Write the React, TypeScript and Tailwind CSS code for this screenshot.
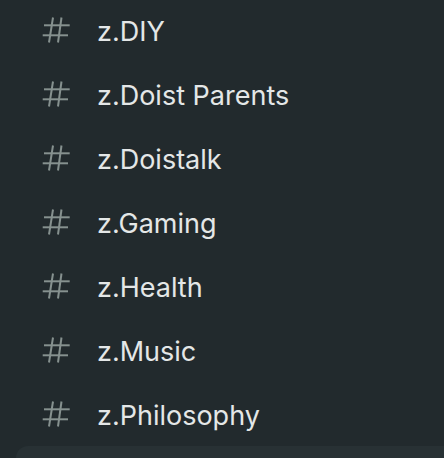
import React from "react";

const items = ["z.DIY", "z.Doist Parents", "z.Doistalk", "z.Gaming", "z.Health", "z.Music", "z.Philosophy"];

function Hash() {
  return (
    <svg width="28" height="26" viewBox="0 0 28 26" fill="none" stroke="#86918f" strokeWidth="2" strokeLinecap="butt" className="shrink-0 -mt-[4px]">
      <line x1="11" y1="0.5" x2="7" y2="25.5" />
      <line x1="19.5" y1="0.5" x2="16" y2="25.5" />
      <line x1="2" y1="8.3" x2="27.7" y2="8.3" />
      <line x1="0.7" y1="18.3" x2="26" y2="18.3" />
    </svg>
  );
}

export default function App() {
  return (
    <div className="w-[444px] h-[458px] overflow-hidden bg-[#222a2d] flex flex-col" style={{ fontFamily: "Inter, 'Noto Sans', sans-serif" }}>
      {items.map((t) => (
        <div key={t} className="h-[64px] shrink-0 flex items-center pl-[42px]">
          <Hash />
          <span className="ml-[27px] -mt-[1px] text-[27px] text-[#e4e7e7] leading-none">{t}</span>
        </div>
      ))}
      <div className="-mt-[2px] ml-[16px] h-[40px] shrink-0 rounded-tl-[12px] bg-[#283134]" />
    </div>
  );
}
